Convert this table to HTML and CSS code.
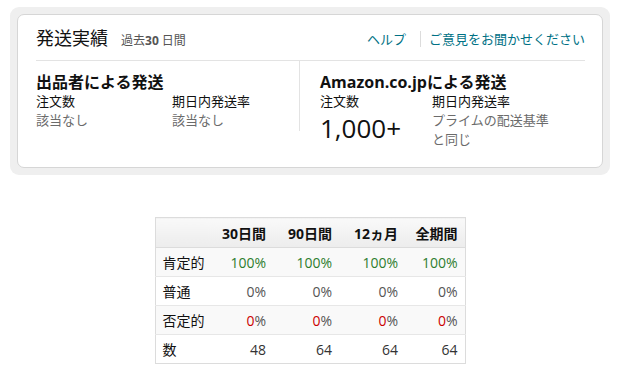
FILE: index.html
```html
<!DOCTYPE html>
<html lang="ja">
<head>
<meta charset="utf-8">
<link rel="stylesheet" href="styles.css">
</head>
<body>
<div class="wrap">
  <div class="card">
    <div class="head">
      <div class="title">発送実績<span class="period">過去<b>30</b> 日間</span></div>
      <div class="links"><a class="lnk">ヘルプ</a><span class="sep"></span><a class="lnk">ご意見をお聞かせください</a></div>
    </div>
    <div class="body">
      <div class="col left">
        <div class="h">出品者による発送</div>
        <div class="stats">
          <div class="stat s1"><div class="lab">注文数</div><div class="val">該当なし</div></div>
          <div class="stat"><div class="lab">期日内発送率</div><div class="val">該当なし</div></div>
        </div>
      </div>
      <div class="col right">
        <div class="h">Amazon.co.jpによる発送</div>
        <div class="stats">
          <div class="stat s2"><div class="lab">注文数</div><div class="big">1,000+</div></div>
          <div class="stat"><div class="lab">期日内発送率</div><div class="val">プライムの配送基準<br>と同じ</div></div>
        </div>
      </div>
    </div>
  </div>
</div>

<table class="fb">
  <colgroup><col class="w0"><col class="w1"><col class="w1"><col class="w1"><col class="w4"></colgroup>
  <thead>
    <tr><th class="c0"></th><th>30日間</th><th>90日間</th><th>12ヵ月</th><th>全期間</th></tr>
  </thead>
  <tbody>
    <tr class="alt"><td class="c0">肯定的</td><td class="g">100%</td><td class="g">100%</td><td class="g">100%</td><td class="g">100%</td></tr>
    <tr><td class="c0">普通</td><td class="n">0%</td><td class="n">0%</td><td class="n">0%</td><td class="n">0%</td></tr>
    <tr class="alt"><td class="c0">否定的</td><td class="n"><span class="r">0</span>%</td><td class="n"><span class="r">0</span>%</td><td class="n"><span class="r">0</span>%</td><td class="n"><span class="r">0</span>%</td></tr>
    <tr><td class="c0">数</td><td>48</td><td>64</td><td>64</td><td>64</td></tr>
  </tbody>
</table>
</body>
</html>
```

FILE: styles.css
```css
* { box-sizing: border-box; }
body {
  margin: 0;
  font-family: "Open Sans", "Noto Sans CJK JP", sans-serif;
  color: #111;
  background: #fff;
}
.wrap {
  margin: 7px 10px 0 10px;
  width: 600px;
  padding: 7px;
  background: #efefef;
  border-radius: 9px;
}
.card {
  background: #fff;
  border: 1px solid #d6d6d6;
  border-radius: 7px;
  padding: 0 17px 18px 18px;
  height: 154px;
}
.head {
  display: flex;
  justify-content: space-between;
  align-items: center;
  height: 46px;
  padding-top: 4px;
  border-bottom: 1px solid #e3e3e3;
}
.title {
  font-size: 18px;
  line-height: 22px;
  color: #111;
}
.period {
  font-size: 12px;
  color: #555;
  margin-left: 13px;
}
.period b { font-weight: bold; }
.links {
  display: flex;
  align-items: center;
  font-size: 13px;
  line-height: 20px;
  padding-bottom: 2px;
}
.lnk { color: #007185; }
.sep {
  width: 1px;
  height: 16px;
  background: #dcdcdc;
  margin: 0 8px 0 14px;
}
.body {
  display: flex;
  align-items: flex-start;
}
.col { padding-top: 11px; }
.left {
  width: 264px;
  border-right: 1px solid #e3e3e3;
  padding-bottom: 1px;
}
.right { padding-left: 20px; }
.h {
  font-size: 16px;
  font-weight: bold;
  line-height: 20px;
  color: #111;
}
.stats { display: flex; }
.stat { font-size: 13px; line-height: 19px; }
.s1 { width: 136px; }
.s2 { width: 112px; }
.lab { color: #111; }
.val { color: #6b6b6b; }
.big {
  margin-top: 3px;
  font-size: 26px;
  line-height: 28px;
  color: #111;
}

.fb {
  margin: 42px auto 0;
  border-collapse: collapse;
  table-layout: fixed;
  border: 1px solid #dcdcdc;
  font-size: 14px;
  width: 310px;
}
.w0 { width: 52px; }
.w1 { width: 66px; }
.w4 { width: 60px; }
.fb th, .fb td {
  text-align: right;
  padding: 0 7px 0 0;
  white-space: nowrap;
}
.fb th {
  height: 30px;
  font-weight: bold;
  color: #111;
  background: linear-gradient(#f9f9f9, #ececec);
  border-bottom: 1px solid #dcdcdc;
}
.fb td {
  height: 29px;
  color: #333;
  border-top: 1px solid #e7e7e7;
}
.fb .c0 {
  text-align: left;
  padding-left: 7px;
  color: #111;
}
.fb tr.alt td { background: #f9f9f9; }
.fb td.g { color: #2e7d2e; }
.fb td.n { color: #555; }
.r { color: #cc0000; }
```
